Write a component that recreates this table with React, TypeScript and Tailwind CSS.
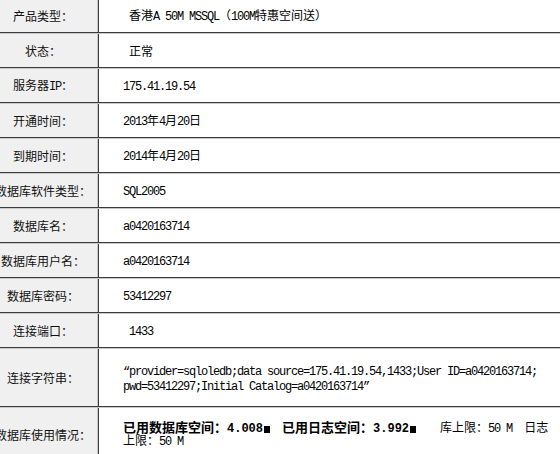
import React from 'react';

const CJK = /([\u3000-\u303f\u4e00-\u9fff\uff00-\uffef]+)/;

// SimSun-like mix: CJK at 12px, latin as 6px-wide monospace
const Txt: React.FC<{ s: string; bold?: boolean }> = ({ s, bold }) => {
  const parts = s.split(CJK);
  return (
    <>
      {parts.map((p, i) => {
        if (!p) return null;
        if (CJK.test(p)) {
          return (
            <span
              key={i}
              className={
                bold
                  ? "font-['Noto_Sans_CJK_SC',sans-serif] text-[13px] font-bold"
                  : "font-['Noto_Sans_CJK_SC',sans-serif] text-[12px]"
              }
            >
              {p}
            </span>
          );
        }
        return (
          <span
            key={i}
            className={
              bold
                ? "font-['Liberation_Mono',monospace] text-[12px] font-bold whitespace-pre-wrap"
                : "font-['Liberation_Mono',monospace] text-[12px] tracking-[-1.2px] whitespace-pre-wrap"
            }
          >
            {p}
          </span>
        );
      })}
    </>
  );
};

const Box = () => <span className="inline-block w-[6px] h-[7px] bg-black ml-[1px] align-[-1px]" />;

interface RowProps {
  label: string;
  tall?: string;
  indent?: boolean;
  lh?: string;
  children: React.ReactNode;
}

const Row: React.FC<RowProps> = ({ label, tall, indent, lh, children }) => (
  <div className={`flex border-t border-t-[#c8c8c8] border-b border-b-[#3c3c3c] ${tall ?? 'h-[35px]'}`}>
    <div className="w-[98px] shrink-0 bg-[#f0f0f0] border-r border-r-[#c8c8c8] flex items-center justify-center pr-[11px] text-[#111] whitespace-nowrap">
      <span className="shrink-0 leading-[14px]">
        <Txt s={label} />
      </span>
    </div>
    <div
      className={`flex-1 min-w-0 bg-white border-l border-l-[#3c3c3c] flex items-center pr-[8px] text-black ${
        lh ?? 'leading-[14px]'
      } ${indent ? 'pl-[30px]' : 'pl-[24px]'}`}
    >
      <div>{children}</div>
    </div>
  </div>
);

export default function App() {
  return (
    <div className="w-[560px] bg-white -mt-[2px] overflow-hidden">
      <Row label="产品类型：" indent>
        <Txt s="香港A 50M MSSQL（100M特惠空间送）" />
      </Row>
      <Row label="状态：" indent>
        <Txt s="正常" />
      </Row>
      <Row label="服务器IP：">
        <Txt s="175.41.19.54" />
      </Row>
      <Row label="开通时间：">
        <Txt s="2013年4月20日" />
      </Row>
      <Row label="到期时间：">
        <Txt s="2014年4月20日" />
      </Row>
      <Row label="数据库软件类型：">
        <Txt s="SQL2005" />
      </Row>
      <Row label="数据库名：">
        <Txt s="a0420163714" />
      </Row>
      <Row label="数据库用户名：">
        <Txt s="a0420163714" />
      </Row>
      <Row label="数据库密码：">
        <Txt s="53412297" />
      </Row>
      <Row label="连接端口：" indent>
        <Txt s="1433" />
      </Row>
      <Row label="连接字符串：" tall="h-[59px]" lh="leading-[12px]">
        <Txt s="“provider=sqloledb;data source=175.41.19.54,1433;User ID=a0420163714; pwd=53412297;Initial Catalog=a0420163714”" />
      </Row>
      <Row label="数据库使用情况：" tall="h-[54px]" lh="leading-[10px]">
        <Txt s="已用数据库空间：4.008" bold />
        <Box />
        <Txt s="  " />
        <Txt s="已用日志空间：3.992" bold />
        <Box />
        <Txt s="    库上限：50 M  日志上限：50 M" />
      </Row>
    </div>
  );
}
